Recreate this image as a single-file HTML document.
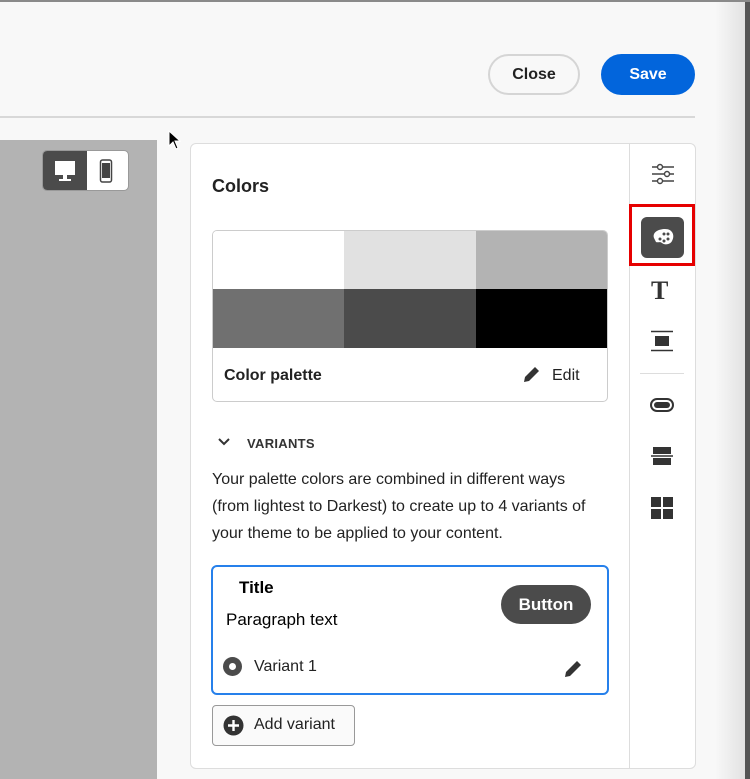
<!DOCTYPE html>
<html><head><style>
*{margin:0;padding:0;box-sizing:border-box}
body{width:750px;height:779px;overflow:hidden;background:#f8f8f8;font-family:"Liberation Sans",sans-serif;position:relative;color:#222}
.a{position:absolute}
</style></head><body>
<div class="a" style="left:715px;top:0;width:30px;height:779px;background:linear-gradient(90deg,#f8f8f8,#e2e2e2)"></div>
<div class="a" style="left:745px;top:0;width:5px;height:779px;background:#555"></div>
<div class="a" style="left:0;top:0;width:750px;height:2px;background:#8a8a8a"></div>
<div class="a" style="left:488px;top:54px;width:92px;height:41px;border:2px solid #d5d5d5;border-radius:21px;font-size:16px;font-weight:bold;text-align:center;line-height:37px;color:#222">Close</div>
<div class="a" style="left:601px;top:54px;width:94px;height:41px;background:#0265dc;border-radius:21px;font-size:16px;font-weight:bold;text-align:center;line-height:41px;color:#fff">Save</div>
<div class="a" style="left:0;top:116px;width:695px;height:2px;background:#d8d8d8"></div>
<div class="a" style="left:0;top:140px;width:157px;height:639px;background:#b3b3b3"></div>
<div class="a" style="left:42px;top:150px;width:87px;height:41px;background:#fff;border:1px solid #999;border-radius:5px;overflow:hidden">
<div class="a" style="left:0;top:0;width:44px;height:41px;background:#4b4b4b"></div>
<svg class="a" style="left:10px;top:9px" width="24" height="22"><rect x="2" y="1" width="20" height="14" fill="#fff"/><rect x="10" y="15" width="4" height="4" fill="#fff"/><rect x="6" y="19" width="12" height="2" fill="#fff"/></svg>
<svg class="a" style="left:56px;top:8px" width="14" height="24"><rect x="1.5" y="1" width="11" height="22" rx="2" fill="none" stroke="#444" stroke-width="1.5"/><rect x="3" y="4" width="8" height="15" fill="#444"/></svg>
</div>
<svg class="a" style="left:168px;top:130px" width="14" height="22"><path d="M1 1 L1 16 L5 12 L8 19 L10 18 L7 11 L12 11 Z" fill="#000" stroke="#fff" stroke-width="1"/></svg>
<div class="a" style="left:190px;top:143px;width:506px;height:626px;background:#fff;border:1px solid #ddd;border-radius:6px"></div>
<div class="a" style="left:629px;top:144px;width:1px;height:624px;background:#ddd"></div>
<div class="a" style="left:212px;top:176px;font-size:18px;font-weight:bold">Colors</div>
<div class="a" style="left:212px;top:230px;width:396px;height:172px;border:1px solid #ccc;border-radius:5px;overflow:hidden">
<div class="a" style="left:0;top:0;width:131px;height:58px;background:#fff"></div>
<div class="a" style="left:131px;top:0;width:132px;height:58px;background:#e1e1e1"></div>
<div class="a" style="left:263px;top:0;width:133px;height:58px;background:#b3b3b3"></div>
<div class="a" style="left:0;top:58px;width:131px;height:59px;background:#707070"></div>
<div class="a" style="left:131px;top:58px;width:132px;height:59px;background:#4b4b4b"></div>
<div class="a" style="left:263px;top:58px;width:133px;height:59px;background:#000"></div>
<div class="a" style="left:11px;top:136px;font-size:16px;font-weight:bold">Color palette</div>
<svg class="a" style="left:308px;top:134px" width="20" height="20"><path d="M3 17 L4 12 L14 2 L18 6 L8 16 Z" fill="#333"/></svg>
<div class="a" style="left:339px;top:136px;font-size:16px">Edit</div>
</div>
<svg class="a" style="left:217px;top:437px" width="14" height="10"><path d="M2 2 L7 7 L12 2" fill="none" stroke="#333" stroke-width="2"/></svg>
<div class="a" style="left:247px;top:436px;font-size:13px;font-weight:bold;color:#333;letter-spacing:.3px">VARIANTS</div>
<div class="a" style="left:212px;top:466px;width:392px;font-size:16px;line-height:27px;color:#222">Your palette colors are combined in different ways (from lightest to Darkest) to create up to 4 variants of your theme to be applied to your content.</div>
<div class="a" style="left:211px;top:565px;width:398px;height:130px;border:2px solid #2680eb;border-radius:6px"></div>
<div class="a" style="left:239px;top:578px;font-size:17px;font-weight:bold;color:#000">Title</div>
<div class="a" style="left:226px;top:610px;font-size:17px;color:#000">Paragraph text</div>
<div class="a" style="left:501px;top:585px;width:90px;height:39px;background:#4b4b4b;border-radius:20px;color:#fff;font-size:17px;font-weight:bold;text-align:center;line-height:39px">Button</div>
<div class="a" style="left:223px;top:657px;width:19px;height:19px;border-radius:50%;background:#4b4b4b"><div class="a" style="left:6px;top:6px;width:7px;height:7px;border-radius:50%;background:#fff"></div></div>
<div class="a" style="left:254px;top:658px;font-size:16px">Variant 1</div>
<svg class="a" style="left:563px;top:657px" width="22" height="22"><path d="M2 20 L3 15 L14 4 L18 8 L7 19 Z" fill="#333"/></svg>
<div class="a" style="left:212px;top:705px;width:143px;height:41px;border:1px solid #999;border-radius:4px;background:#fafafa"></div>
<svg class="a" style="left:223px;top:715px" width="21" height="21"><circle cx="10.5" cy="10.5" r="10" fill="#333"/><path d="M10.5 5v11M5 10.5h11" stroke="#fff" stroke-width="2.4"/></svg>
<div class="a" style="left:254px;top:716px;font-size:16px">Add variant</div>
<svg class="a" style="left:651px;top:162px" width="24" height="24"><g stroke="#444" stroke-width="1.4" fill="#fff"><path d="M1 5h22M1 12h22M1 19h22"/><circle cx="9" cy="5" r="2.5"/><circle cx="16" cy="12" r="2.5"/><circle cx="9" cy="19" r="2.5"/></g></svg>
<div class="a" style="left:629px;top:204px;width:66px;height:62px;border:3px solid #e60000"></div>
<div class="a" style="left:641px;top:217px;width:43px;height:41px;background:#4b4b4b;border-radius:6px"></div>
<svg class="a" style="left:651px;top:228px" width="24" height="18"><path d="M3 10 C1 4 8 1 14 1 C22 1 24 8 21 13 C19 17 13 17 11 15 C9 13 7 15 5 14 Z" fill="#fff"/><circle cx="9" cy="11" r="1.5" fill="#4b4b4b"/><circle cx="13" cy="13" r="1.5" fill="#4b4b4b"/><circle cx="17" cy="11" r="1.5" fill="#4b4b4b"/><circle cx="17" cy="6" r="1.5" fill="#4b4b4b"/><circle cx="13" cy="6" r="1.5" fill="#4b4b4b"/></svg>
<div class="a" style="left:651px;top:276px;font-size:26px;font-family:'Liberation Serif',serif;font-weight:bold;color:#333">T</div>
<svg class="a" style="left:650px;top:330px" width="24" height="22"><path d="M1 1.5h22M1 20.5h22" stroke="#333" stroke-width="1.5"/><rect x="5" y="6" width="14" height="10" fill="#333"/></svg>
<div class="a" style="left:640px;top:373px;width:44px;height:1px;background:#ddd"></div>
<div class="a" style="left:650px;top:398px;width:24px;height:14px;border:2px solid #333;border-radius:7px"><div class="a" style="left:2px;top:2px;width:16px;height:6px;background:#333;border-radius:3px"></div></div>
<svg class="a" style="left:651px;top:446px" width="22" height="20"><rect x="2" y="1" width="18" height="7" fill="#333"/><rect x="2" y="12" width="18" height="7" fill="#333"/><path d="M0 10h22" stroke="#333" stroke-width="1.5"/></svg>
<svg class="a" style="left:651px;top:497px" width="22" height="22"><rect x="0" y="0" width="10" height="10" fill="#333"/><rect x="12" y="0" width="10" height="10" fill="#333"/><rect x="0" y="12" width="10" height="10" fill="#333"/><rect x="12" y="12" width="10" height="10" fill="#333"/></svg>
</body></html>
